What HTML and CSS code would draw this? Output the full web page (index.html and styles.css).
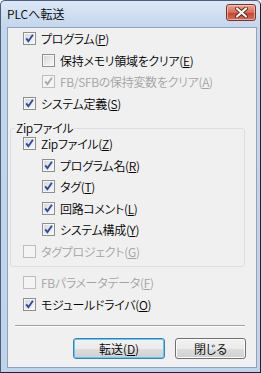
FILE: index.html
```html
<!DOCTYPE html>
<html lang="ja">
<head>
  <meta charset="UTF-8" />
  <meta name="viewport" content="width=device-width, initial-scale=1.0">
  <title>PLCへ転送</title>
  <link rel="stylesheet" href="styles.css">
</head>
<body>
  <div class="window">
    <div class="titlebar">
      <span class="title">PLCへ転送</span>
      <span class="close">
        <svg width="13" height="11" viewBox="0 0 13 11">
          <path d="M2 1.5 L11 9.5 M11 1.5 L2 9.5" stroke="#5a2a22" stroke-width="4" stroke-linecap="round"/>
          <path d="M2 1.5 L11 9.5 M11 1.5 L2 9.5" stroke="#ffffff" stroke-width="2.2" stroke-linecap="round"/>
        </svg>
      </span>
    </div>

    <div class="client">
      <div class="row"><span class="box checked"></span>プログラム(<u>P</u>)</div>
      <div class="row sub"><span class="box"></span>保持メモリ領域をクリア(<u>E</u>)</div>
      <div class="row sub disabled"><span class="box checked"></span>FB/SFBの保持変数をクリア(<u>A</u>)</div>
      <div class="row"><span class="box checked"></span>システム定義(<u>S</u>)</div>

      <fieldset class="group">
        <legend>Zipファイル</legend>
        <div class="row"><span class="box checked"></span>Zipファイル(<u>Z</u>)</div>
        <div class="row sub"><span class="box checked"></span>プログラム名(<u>R</u>)</div>
        <div class="row sub"><span class="box checked"></span>タグ(<u>T</u>)</div>
        <div class="row sub"><span class="box checked"></span>回路コメント(<u>L</u>)</div>
        <div class="row sub"><span class="box checked"></span>システム構成(<u>Y</u>)</div>
        <div class="row disabled"><span class="box"></span>タグプロジェクト(<u>G</u>)</div>
      </fieldset>

      <div class="row disabled after-group"><span class="box"></span>FBパラメータデータ(<u>F</u>)</div>
      <div class="row"><span class="box checked"></span>モジュールドライバ(<u>O</u>)</div>

      <div class="separator"></div>

      <div class="buttons">
        <button class="btn default">転送(<u>D</u>)</button>
        <button class="btn close-btn">閉じる</button>
      </div>
    </div>
  </div>
</body>
</html>
```

FILE: styles.css
```css
body {
  margin: 0;
  font-family: "Noto Sans CJK JP", "Liberation Sans", sans-serif;
  font-size: 12px;
  font-weight: 350;
  font-feature-settings: "palt";
  color: #000;
}
.window {
  width: 261px;
  height: 373px;
  box-sizing: border-box;
  border: 1px solid #4d5f78;
  border-right-color: #1c2430;
  border-bottom-color: #1c2430;
  border-radius: 5px 5px 0 0;
  background: linear-gradient(#dce8f6, #c4d6ec 26px, #bfd3ea);
  display: flex;
  flex-direction: column;
}
.titlebar {
  height: 26px;
  display: flex;
  align-items: flex-start;
  padding-left: 6px;
}
.title {
  margin-top: 5px;
  font-size: 12px;
  line-height: 16px;
}
.close {
  margin-left: auto;
  margin-right: 4px;
  margin-top: 3px;
  width: 30px;
  height: 17px;
  box-sizing: border-box;
  border: 1px solid #7a3426;
  border-radius: 3px;
  background: linear-gradient(#e9a99b, #d46b55 50%, #c3422a 51%, #d5705a);
  box-shadow: inset 0 0 0 1px rgba(255, 210, 200, 0.6);
  display: flex;
  align-items: center;
  justify-content: center;
}
.client {
  flex: 1;
  margin: 0 3px 4px 6px;
  border: 1px solid #8ea3bf;
  background: #f0f0f0;
  display: flex;
  flex-direction: column;
}
.row {
  height: 21.5px;
  display: flex;
  align-items: center;
  padding-left: 15px;
  white-space: nowrap;
  letter-spacing: -0.3px;
}
.row.sub {
  padding-left: 34px;
}
.row.disabled {
  color: #a3a3a3;
}
u {
  text-underline-offset: 1px;
}
.box {
  width: 13px;
  height: 13px;
  box-sizing: border-box;
  margin-right: 5px;
  flex-shrink: 0;
  border: 1px solid #8e8f8f;
  background: linear-gradient(135deg, #d2d5da, #fbfbfb);
  box-shadow: inset 0 0 0 1px #f6f6f6;
}
.box.checked {
  background-image: url("data:image/svg+xml,%3Csvg xmlns='http://www.w3.org/2000/svg' width='11' height='11'%3E%3Cpath d='M2.2 5.4 L4.4 8.2 L8.9 1.8' fill='none' stroke='%233048a0' stroke-width='1.9'/%3E%3C/svg%3E"), linear-gradient(135deg, #d2d5da, #fbfbfb);
  background-repeat: no-repeat;
}
.disabled .box {
  border-color: #bdbdbd;
  background: #f4f4f4;
  box-shadow: none;
}
.disabled .box.checked {
  background: url("data:image/svg+xml,%3Csvg xmlns='http://www.w3.org/2000/svg' width='11' height='11'%3E%3Cpath d='M2.2 5.4 L4.4 8.2 L8.9 1.8' fill='none' stroke='%23a8a8a8' stroke-width='1.9'/%3E%3C/svg%3E") no-repeat, #f4f4f4;
}
.group {
  margin: 9px 11px 0 2px;
  padding: 0 0 4px 0;
  border: 1px solid #d5dfe5;
  border-radius: 3px;
  min-width: 0;
}
.group legend {
  margin-left: 4px;
  padding: 0 1px;
  height: 10px;
  line-height: 10px;
  letter-spacing: -0.3px;
}
.group .row {
  padding-left: 12px;
}
.group .row.sub {
  padding-left: 31px;
}
.after-group {
  margin-top: 5px;
}
.separator {
  margin: 10px 11px 0 7px;
  border-top: 1px solid #a0a0a0;
  border-bottom: 1px solid #ffffff;
}
.buttons {
  display: flex;
  justify-content: flex-end;
  gap: 10px;
  margin-top: 11px;
  padding-right: 10px;
}
.btn {
  height: 21px;
  font-family: inherit;
  font-size: 12px;
  font-weight: 350;
  font-feature-settings: "palt";
  color: #000;
  border: 1px solid #707070;
  border-radius: 3px;
  background: linear-gradient(#f2f2f2, #ebebeb 50%, #dddddd 51%, #cfcfcf);
  box-shadow: inset 0 0 0 1px #fbfbfb;
  padding: 0;
}
.btn.default {
  width: 92px;
  border-color: #3c7fb1;
  box-shadow: inset 0 0 0 1px #5fcdf5;
}
.close-btn {
  width: 71px;
}
```
